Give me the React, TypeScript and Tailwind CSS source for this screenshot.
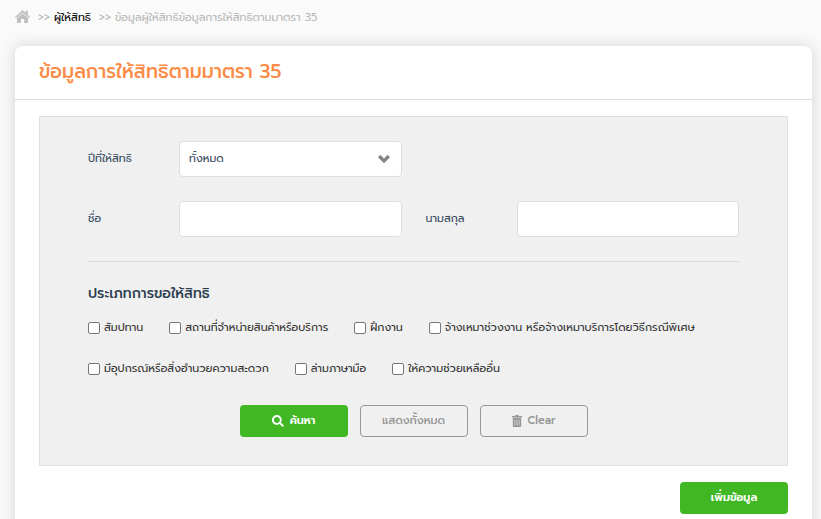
import type { ReactNode } from "react";
import { FaSearch } from "react-icons/fa";

const rightTypes: string[][] = [
  [
    "สัมปทาน",
    "สถานที่จำหน่ายสินค้าหรือบริการ",
    "ฝึกงาน",
    "จ้างเหมาช่วงงาน หรือจ้างเหมาบริการโดยวิธีกรณีพิเศษ",
  ],
  ["มีอุปกรณ์หรือสิ่งอำนวยความสะดวก", "ล่ามภาษามือ", "ให้ความช่วยเหลืออื่น"],
];

const fieldClass =
  "h-9 w-full min-w-0 appearance-none rounded border border-[#dedede] bg-white px-[9px] text-[11px] text-[#34495e] outline-none";

function HomeIcon() {
  return (
    <svg viewBox="0 0 14 12" className="h-[13px] w-[15px]" fill="currentColor" aria-hidden="true">
      <path d="M7 0 9.8 2.5V.6h2.1v3.8L14 6.4l-1 1.1L7 2.3 1 7.5 0 6.4z" />
      <path d="M7 3 12.2 7.5V12H8.5V8.4h-3V12H1.8V7.5z" />
    </svg>
  );
}

function ChevronIcon() {
  return (
    <svg
      viewBox="0 0 14 10"
      className="pointer-events-none absolute right-[11px] top-[13px] h-[10px] w-[14px] text-[#858585]"
      fill="currentColor"
      aria-hidden="true"
    >
      <path d="M1 3.2 3.4.8 7 4.4 10.6.8 13 3.2 7 9.2z" />
    </svg>
  );
}

function TrashIcon() {
  return (
    <svg viewBox="0 0 10 12" className="h-3 w-[10px]" fill="currentColor" aria-hidden="true">
      <path d="M0 1h3l.6-1h2.8L7 1h3v1.4H0z" />
      <path fillRule="evenodd" d="M.8 3h8.4v8q0 1-1 1H1.8q-1 0-1-1zM2.6 4.5v6h.6v-6zm2.1 0v6h.6v-6zm2.1 0v6h.6v-6z" />
    </svg>
  );
}

function Label({ htmlFor, children }: { htmlFor: string; children: ReactNode }) {
  return (
    <label htmlFor={htmlFor} className="whitespace-nowrap text-[11px] text-[#34495e]">
      {children}
    </label>
  );
}

function CheckItem({ text }: { text: string }) {
  return (
    <label className="flex items-center gap-1 whitespace-nowrap text-[11px] text-[#333333]">
      <input
        type="checkbox"
        className="size-3 shrink-0 appearance-none rounded-[2px] border border-[#767676] bg-white checked:bg-[#0075ff]"
      />
      {text}
    </label>
  );
}

export default function App() {
  return (
    <div className="min-h-screen overflow-hidden bg-[#fafafa] font-['Prompt','Noto_Sans_Thai','Lato',sans-serif] leading-4">
      <nav className="flex h-[46px] items-start gap-2 whitespace-nowrap px-[15px] pt-[10px] text-[11px] text-[#b8b8b8]">
        <a href="#home" aria-label="Home" className="text-[#c0c0c0]">
          <HomeIcon />
        </a>
        <span className="flex gap-1">
          &gt;&gt;
          <a href="#grantors" className="text-black">ผู้ให้สิทธิ</a>
        </span>
        <span className="flex gap-1">
          &gt;&gt;
          <span>ข้อมูลผู้ให้สิทธิข้อมูลการให้สิทธิตามมาตรา 35</span>
        </span>
      </nav>

      <main className="ml-[15px] mr-[9px] rounded-t-[8px] bg-white pb-6 shadow-[0_0_16px_rgba(0,0,0,0.16)]">
        <header className="border-b border-[#dadada] px-6 pb-[14px] pt-[13px]">
          <h1 className="text-[19px] font-medium leading-[26px] text-[#fb8c47]">ข้อมูลการให้สิทธิตามมาตรา 35</h1>
        </header>

        <div className="px-6 pt-4">
          <form className="border border-[#e0e0e0] bg-[#f0f0f0] px-12 pb-7 pt-6" onSubmit={(e) => e.preventDefault()}>
            <div className="grid grid-cols-[67px_1fr_67px_1fr] items-center gap-6 border-b border-[#dadada] pb-6">
              <Label htmlFor="year">ปีที่ให้สิทธิ</Label>
              <div className="relative">
                <select id="year" className={fieldClass}>
                  <option>ทั้งหมด</option>
                </select>
                <ChevronIcon />
              </div>
              <span className="col-span-2" />
              <Label htmlFor="first">ชื่อ</Label>
              <input id="first" className={fieldClass} />
              <Label htmlFor="last">นามสกุล</Label>
              <input id="last" className={fieldClass} />
            </div>

            <fieldset className="pt-6">
              <legend className="float-left text-[14px] font-medium text-[#2c3e50]">ประเภทการขอให้สิทธิ</legend>
              <div className="clear-both flex flex-col gap-[25px] pt-[18px]">
                {rightTypes.map((row) => (
                  <div key={row[0]} className="flex gap-x-[26px]">
                    {row.map((text) => (
                      <CheckItem key={text} text={text} />
                    ))}
                  </div>
                ))}
              </div>
            </fieldset>

            <div className="mt-7 flex justify-center gap-3 text-[11px] font-medium">
              <button className="flex h-8 w-[108px] items-center justify-center gap-1.5 rounded bg-[#41b823] font-semibold text-white">
                <FaSearch className="size-3" />
                ค้นหา
              </button>
              <button type="button" className="h-8 w-[108px] rounded border border-[#969696] text-[#969696]">
                แสดงทั้งหมด
              </button>
              <button type="reset" className="flex h-8 w-[108px] items-center justify-center gap-1.5 rounded border border-[#969696] text-[#969696]">
                <TrashIcon />
                Clear
              </button>
            </div>
          </form>
          <div className="flex justify-end pt-4">
            <button className="h-8 w-[108px] rounded bg-[#41b823] text-[11px] font-semibold text-white">เพิ่มข้อมูล</button>
          </div>
        </div>
      </main>
    </div>
  );
}
